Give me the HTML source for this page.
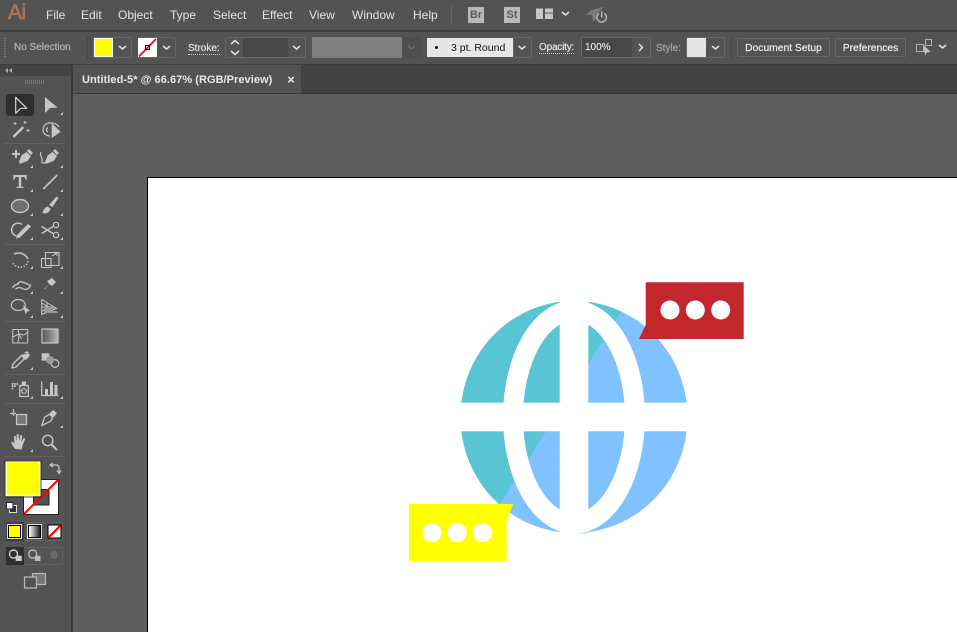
<!DOCTYPE html>
<html><head><meta charset="utf-8">
<style>
html,body{margin:0;padding:0;background:#5f5f5f;}
#p{position:relative;width:957px;height:632px;overflow:hidden;background:#5f5f5f;font-family:"Liberation Sans",sans-serif;}
.a{position:absolute;}
.t{position:absolute;white-space:nowrap;line-height:14px;}
.m{font-size:12px;color:#e4e4e4;top:8px;}
.c{font-size:10px;color:#e0e0e0;-webkit-text-stroke:.2px currentColor;}
.b{position:absolute;box-sizing:border-box;border:1px solid #666;border-radius:2px;}
.sep{position:absolute;left:5px;width:60px;height:1px;background:#626262;}
svg{position:absolute;left:0;top:0;}
</style></head><body>
<div id="p">
<div class="a" style="left:0;top:0;width:957px;height:30px;background:#535353"></div>
<div class="a" style="left:0;top:30px;width:957px;height:2px;background:#3f3f3f"></div>
<div class="a" style="left:0;top:32px;width:957px;height:32px;background:#535353"></div>
<div class="a" style="left:0;top:64px;width:957px;height:1px;background:#3c3c3c"></div>
<div class="a" style="left:0;top:65px;width:957px;height:28px;background:#424242"></div>
<div class="a" style="left:73px;top:65px;width:228px;height:28px;background:#535353"></div>
<div class="a" style="left:73px;top:93px;width:884px;height:1px;background:#383838"></div>
<div class="a" style="left:0;top:65px;width:71px;height:567px;background:#535353"></div>
<div class="a" style="left:0;top:65px;width:71px;height:11px;background:#444"></div>
<div class="a" style="left:71px;top:65px;width:2px;height:567px;background:#3a3a3a"></div>
<div class="a" style="left:147px;top:177px;width:810px;height:455px;background:#fff;border-left:1px solid #000;border-top:1px solid #000;box-sizing:border-box"></div>

<span class="t" style="left:8px;top:0px;font-size:21px;line-height:26px;color:#a9744f;-webkit-text-stroke:.8px #a9744f;letter-spacing:-.5px">Ai</span>
<span class="t m" style="left:46px">File</span><span class="t m" style="left:81px">Edit</span><span class="t m" style="left:118px">Object</span><span class="t m" style="left:170px">Type</span><span class="t m" style="left:213px">Select</span><span class="t m" style="left:262px">Effect</span><span class="t m" style="left:309px">View</span><span class="t m" style="left:352px">Window</span><span class="t m" style="left:413px">Help</span>
<div class="a" style="left:451px;top:5px;width:1px;height:20px;background:#666"></div>
<div class="a" style="left:468px;top:7px;width:16px;height:16px;background:#b9b9b9;color:#5a5a5a;font:bold 11px/16px 'Liberation Sans',sans-serif;text-align:center">Br</div>
<div class="a" style="left:504px;top:7px;width:16px;height:16px;background:#b9b9b9;color:#5a5a5a;font:bold 11px/16px 'Liberation Sans',sans-serif;text-align:center">St</div>

<span class="t c" style="left:14px;top:41px;color:#b4b4b4">No Selection</span>
<div class="a" style="left:4px;top:38px;width:2px;height:19px;background:repeating-linear-gradient(#777 0 1px,transparent 1px 2px)"></div>
<div class="a" style="left:87px;top:36px;width:1px;height:24px;background:#484848"></div>
<div class="b" style="left:93px;top:37px;width:39px;height:21px"></div>
<div class="a" style="left:94px;top:38px;width:19px;height:19px;background:#ff0;box-shadow:inset 0 0 0 1px #fff"></div>
<div class="b" style="left:138px;top:37px;width:38px;height:21px"></div>
<div class="a" style="left:138px;top:38px;width:19px;height:19px;background:#fff"></div>
<span class="t c" style="left:188px;top:43px;border-bottom:1px dotted #ccc;line-height:11px">Stroke:</span>
<div class="b" style="left:225px;top:37px;width:81px;height:21px"></div>
<div class="a" style="left:243px;top:38px;width:45px;height:19px;background:#474747"></div>
<div class="a" style="left:312px;top:37px;width:90px;height:21px;background:#808080"></div>
<div class="a" style="left:402px;top:37px;width:19px;height:21px;background:#4e4e4e"></div>
<div class="a" style="left:427px;top:38px;width:86px;height:19px;background:#e6e6e6"></div>
<span class="t" style="left:451px;top:42px;font-size:10.5px;line-height:13px;color:#111">3 pt. Round</span>
<div class="a" style="left:435px;top:46px;width:3px;height:3px;border-radius:50%;background:#111"></div>
<div class="b" style="left:513px;top:37px;width:19px;height:21px"></div>
<span class="t c" style="left:539px;top:42px;border-bottom:1px dotted #ccc;line-height:11px;letter-spacing:-.2px">Opacity:</span>
<div class="b" style="left:581px;top:37px;width:70px;height:21px"></div>
<div class="a" style="left:582px;top:38px;width:50px;height:19px;background:#474747"></div>
<span class="t" style="left:585px;top:41px;font-size:10px;line-height:14px;color:#e4e4e4;-webkit-text-stroke:.15px #e4e4e4">100%</span>
<span class="t c" style="left:656px;top:43px;line-height:12px;color:#a6a6a6">Style:</span>
<div class="b" style="left:686px;top:37px;width:39px;height:21px"></div>
<div class="a" style="left:687px;top:38px;width:19px;height:19px;background:#e4e4e4"></div>
<div class="a" style="left:731px;top:36px;width:1px;height:24px;background:#484848"></div>
<div class="b" style="left:737px;top:38px;width:93px;height:19px;color:#eee;font-size:10.3px;line-height:20px;text-align:center;-webkit-text-stroke:.2px #eee">Document Setup</div>
<div class="b" style="left:835px;top:38px;width:71px;height:19px;color:#eee;font-size:10.3px;line-height:20px;text-align:center;-webkit-text-stroke:.2px #eee">Preferences</div>

<span class="t" style="left:82px;top:73px;font-size:11px;color:#e8e8e8;font-weight:bold;letter-spacing:.05px">Untitled-5* @ 66.67% (RGB/Preview)</span>

<div class="a" style="left:6px;top:94px;width:28px;height:22px;background:#2f2f2f;border-radius:3px"></div>
<div class="sep" style="top:143px"></div><div class="sep" style="top:244px"></div><div class="sep" style="top:321px"></div><div class="sep" style="top:374px"></div><div class="sep" style="top:403px"></div><div class="sep" style="top:456px"></div>
<div class="a" style="left:25px;top:80px;width:20px;height:4px;background:repeating-linear-gradient(90deg,#777 0 1px,transparent 1px 2px)"></div>

<div class="a" style="left:6px;top:522px;width:57px;height:19px;box-sizing:border-box;border:1px solid #616161;border-radius:2px"></div>
<div class="a" style="left:6px;top:522px;width:18px;height:19px;background:#3d3d3d"></div>
<div class="a" style="left:8px;top:525px;width:13px;height:13px;background:#ff0;border:1px solid #000;box-sizing:border-box;box-shadow:0 0 0 1px #ddd"></div>
<div class="a" style="left:28px;top:525px;width:13px;height:13px;background:linear-gradient(90deg,#fff,#222);border:1px solid #000;box-sizing:border-box;box-shadow:0 0 0 1px #ddd"></div>
<div class="a" style="left:6px;top:547px;width:57px;height:18px;box-sizing:border-box;border:1px solid #616161;border-radius:2px"></div>
<div class="a" style="left:6px;top:547px;width:18px;height:18px;background:#2f2f2f"></div>

<svg width="957" height="632" viewBox="0 0 957 632">
<defs>
<mask id="mk" maskUnits="userSpaceOnUse" x="400" y="280" width="350" height="270">
<rect x="400" y="280" width="350" height="270" fill="#fff"/>
<ellipse cx="574" cy="417" rx="61" ry="106.500" fill="none" stroke="#000" stroke-width="20"/>
<rect x="559.700" y="280" width="28.600" height="270" fill="#000"/>
<rect x="400" y="402.700" width="350" height="28.600" fill="#000"/>
</mask>
<clipPath id="teal"><path d="M400 280H641L480 536L400 536Z"/></clipPath>
<linearGradient id="gr"><stop offset="0" stop-color="#555"/><stop offset="1" stop-color="#b5b5b5"/></linearGradient>
</defs>
<g mask="url(#mk)">
<ellipse cx="574" cy="417" rx="113.500" ry="116" fill="#7fc2ff"/>
<ellipse cx="574" cy="417" rx="113.500" ry="116" fill="#58c4d4" clip-path="url(#teal)"/>
</g>
<path d="M575 533.500Q582 533.300 588.500 531.500V532.500Q582 533.800 575 533.500Z" fill="#7fc2ff"/>
<path d="M645.700 282.300H743.700V339H639L645.700 325Z" fill="#c1272d"/>
<g fill="#fff"><circle cx="670" cy="310" r="9.500"/><circle cx="695.300" cy="310" r="9.500"/><circle cx="720.700" cy="310" r="9.500"/></g>
<path d="M409 504H513.300L506.700 520V561H409Z" fill="#ff0"/>
<g fill="#fff"><circle cx="432" cy="532.700" r="9.500"/><circle cx="457.300" cy="532.700" r="9.500"/><circle cx="482.700" cy="532.700" r="9.500"/></g>

<!-- top bar / control bar icons -->
<path d="M536 8.500h7v10.500h-7zM545 8.500h8v4h-8zM545 13.500h8v5.500h-8z" fill="#c8c8c8"/>
<g fill="none" stroke="#e4e4e4" stroke-width="1.500">
<path d="M562 12l3.500 3 3.500-3M119 46l3.500 3 3.500-3M163 46l3.500 3 3.500-3M293 46l3.500 3 3.500-3M518.500 46l3.500 3 3.500-3M639 44l3.500 3.500-3.500 3.500M712 46l3.500 3 3.500-3M939 45l3.500 3 3.500-3"/>
<path d="M231 44l4-3.500 4 3.500M231 51l4 3.500 4-3.500"/>
</g>
<path d="M408 46l3.500 3 3.500-3" fill="none" stroke="#6e6e6e" stroke-width="1.500"/>
<path d="M603 7L591 10.500 586 14.500 592 15 593 21.500 596 19.500 597 14 603 8z" fill="#7c7c7c"/>
<path d="M599 13.500a4.700 4.700 0 1 0 5.400 0M601.700 11.500v6" fill="none" stroke="#b8b8b8" stroke-width="1.400"/>
<path d="M139 56.500L156 39" stroke="#f00" stroke-width="1.800"/><rect x="145.500" y="45.500" width="4" height="4" fill="none" stroke="#000"/>
<path d="M916.500 44.500h7v7h-7zM925.500 39.500h6v6h-6z" fill="none" stroke="#b0b0b0"/><path d="M923.300 45l7.400 6.700-4 .8-1.700 3z" fill="#c4c4c4"/>
<text x="291" y="84" font-family="Liberation Sans" font-size="13" font-weight="bold" fill="#e8e8e8" text-anchor="middle">×</text>
<path d="M12 68l-3 2.500 3 2.500zM8 68l-3 2.500 3 2.500z" fill="#aaa"/>

<!-- tool outlines -->
<g fill="none" stroke="#c6c6c6" stroke-width="1.200" stroke-linejoin="round">
<path d="M15.700 97.300V113.300L20.700 108.300H26.700Z" stroke="#d8d8d8"/>
<path d="M13.300 137L23.300 127" stroke-width="2.400"/>
<path d="M15 122v3M13.500 123.500h3M25 121v3M23.500 122.500h3M28 129v3M26.500 130.500h3" stroke-width="1"/>
<path d="M52 123c-6-1-9 3-9 7 0 3 3 6 7 6M48 128c-2 0-2 3 0 4M52 123c3 0 6 2 7 4"/>
<path d="M41 152c-2 4 2 5 1 9-.5 2 2 3 4 1"/>
<path d="M43.300 189L57.300 175" stroke-width="1.600"/>
<ellipse cx="20" cy="206" rx="8.500" ry="6.500" fill="#6e6e6e" stroke-width="1.400"/>
<path d="M22 224.500a6.500 6.500 0 1 0-5.500 11.500" stroke-width="1.500"/>
<path d="M41.700 226.500L53 233.500M41.700 233.500L53 226.500" stroke-width="1.500"/><circle cx="56" cy="225" r="2.700"/><circle cx="56" cy="235" r="2.700"/>
<path d="M14 254c5-2 11-1 14 5" stroke-width="1.500"/>
<path d="M28.300 261a8.500 8.500 0 0 1-16 1" stroke-dasharray="1.500 1.500" stroke-width="1.500"/>
<path d="M41.500 258.500h9.500v9h-9.500zM45.500 252.500h13.500v13h-13.500z" stroke-width="1.100"/>
<path d="M52 256l5-3M54 253h3v3" stroke-width="1"/>
<path d="M12.500 288c2-5 5-2 6-5 2-3 4 0 7 0 2 1 4 3 5 2-1 4-5 6-9 3-3-1-4 0-6 1" stroke-width="1.400"/>
<ellipse cx="18.300" cy="305" rx="7" ry="5.500"/>
<path d="M41.700 299.500v15l15-6zM41.700 307h12M41.700 303l7 4-7 4.500M47 302v10" stroke-width="1"/>
<path d="M12.700 329.500h15v13.500h-15zM12.700 337l6-3 3 5M18 329.500l1 4.500 5 1 3.700-3M19 334l-1 9" stroke-width="1"/>
<rect x="42" y="329" width="16" height="14" fill="url(#gr)" stroke="#c6c6c6"/>
<path d="M13 364l9-9 3 3-9 9-4 1z" stroke-width="1.400"/>
<circle cx="55" cy="363.500" r="3.800" stroke-width="1.300"/>
<rect x="19.800" y="385.500" width="8.500" height="11" stroke-width="1.300"/><circle cx="24" cy="391" r="2.300"/>
<path d="M41.700 381.500V395.500H58.300" stroke-width="1.300"/>
<path d="M10 413.500h6M13.500 409v7"/><rect x="16.500" y="414.500" width="10" height="10" fill="#777" stroke-width="1.300"/>
<path d="M41.700 425.700l3-8.500 5-3 3 3-2 4z" stroke-width="1.300"/>
<circle cx="47.700" cy="440.500" r="5.200" stroke-width="1.400"/><path d="M51.500 444.500l5.500 5.500" stroke-width="2"/>
<rect x="32.500" y="573.500" width="13" height="11" fill="#777" stroke="#bbb"/><rect x="24.500" y="577" width="12" height="11" fill="#535353" stroke="#bbb"/>
</g>
<!-- tool fills -->
<g fill="#c6c6c6">
<path d="M45 97V113L50 108L57.500 107.500Z"/>
<path d="M51.700 123.300V138L60.700 131.700Z"/>
<path d="M12 153h8v2h-8zM15 150h2v8h-2z"/>
<path d="M19 162l2.500-6.500 5-3.500 4.500 4-3.500 5-6.500 2.500-1 .5z"/><path d="M27 151l2-2 4 4-2 2z"/>
<path d="M45 162l2.500-6.500 5-3.500 4.500 4-3.500 5-6.500 2.500-1 .5z"/><path d="M53 151l2-2 4 4-2 2z"/>
<path d="M13.300 175h13.400v4.500h-1.200l-1-2.500h-3.300v9.700h2.300v1.300h-7v-1.300h2.300v-9.700h-3.300l-1 2.500h-1.200z"/>
<path d="M42.500 213c1-3 2.500-6 5-6.500l3 2c0 3-4 6-8 4.500z"/><path d="M49 205l7.500-8.500 2 1.500-6 9z"/>
<path d="M17 235l11-11 3 2.500-11 11-4 1z"/>
<path d="M44 289l5-5-2-3 2-1 3-2 4 4-3 3-1 1-3-2-4 5z"/>
<path d="M23 305l7 6-3 .5-1.500 3z"/>
<path d="M44 313h14l-1-2h-6v-2h4l-1-2h-10z" fill="#9a9a9a"/>
<path d="M22 355l6-2 2 2-2 3-3 2-3-3zM24 353l3-2 2 2"/>
<path d="M41.700 353.300h7.600v7.400h-7.600z"/>
<circle cx="50" cy="360" r="4" fill="#999"/>
<path d="M11.700 383h1.700v1.700h-1.700zM14 383h1.700v1.700h-1.700zM16.300 383h1.700v1.700h-1.700zM11.700 385.300h1.700v1.700h-1.700zM14 385.300h1.700v1.700h-1.700zM11.700 387.700h1.700v1.700h-1.700zM21.700 381.500h4.300v4h-4.300z"/>
<path d="M45 389h3v6h-3zM50 382h3v13h-3zM54.500 385h3v10h-3z"/>
<path d="M50 413l3-3 4 3-3 4-4-1z"/>
<path d="M15 449c-2-3-4-6-3.500-7 1-1 2 0 3 2l-.5-7c0-1.500 1.500-1.500 2 0l1 4-.3-6c0-1.500 2-1.500 2 0l.5 6 1-5c.3-1.500 2-1.500 1.900 0l-.7 6 2-3.500c.7-1 2-.5 1.700.5l-2.500 6.500-1 4z"/>
<path d="M30 168l3-3v3zM60 168l3-3v3zM30 192l3-3v3zM60 192l3-3v3zM30 216l3-3v3zM60 216l3-3v3zM30 240l3-3v3zM60 240l3-3v3zM30 269l3-3v3zM60 269l3-3v3zM30 294l3-3v3zM60 294l3-3v3zM30 318l3-3v3zM60 318l3-3v3zM30 370l3-3v3zM30 399l3-3v3zM60 399l3-3v3zM60 428l3-3v3zM30 452l3-3v3zM60 115l3-3v3z"/>
</g>

<!-- fill/stroke -->
<rect x="23.500" y="479.500" width="35" height="35" fill="#fff" stroke="#222"/>
<rect x="33.500" y="489.500" width="15.500" height="15.500" fill="#535353" stroke="#222"/>
<path d="M24 514L58 480" stroke="#f00" stroke-width="2"/>
<rect x="6" y="461.500" width="34" height="34" fill="#ff0" stroke="#fff" stroke-width="1.500"/>
<rect x="5" y="461" width="36" height="36" fill="none" stroke="#222" stroke-width=".8"/>
<path d="M51 465h5c2 0 3 1 3 3v4M57 470.500l2 3 2-3M53 463l-3 2 3 2" fill="none" stroke="#c8c8c8" stroke-width="1.200"/>
<rect x="9.500" y="505.500" width="7" height="7" fill="#333" stroke="#ddd"/><rect x="6.500" y="502.500" width="6.500" height="6.500" fill="#fff" stroke="#222"/>
<rect x="48" y="525" width="13" height="13" fill="#fff" stroke="#000"/><path d="M48.500 537.500L60.500 525.500" stroke="#f00" stroke-width="2.200"/>
<circle cx="13.500" cy="554" r="4" fill="none" stroke="#ccc" stroke-width="1.400"/><rect x="15.700" y="555.700" width="6" height="5.300" fill="#ccc"/>
<circle cx="32.700" cy="554" r="4" fill="none" stroke="#bbb" stroke-width="1.400"/><rect x="35" y="555.700" width="5.500" height="5.300" fill="#bbb"/>
<circle cx="54" cy="555" r="4" fill="#6a6a6a"/>
</svg>
</div>
</body></html>
